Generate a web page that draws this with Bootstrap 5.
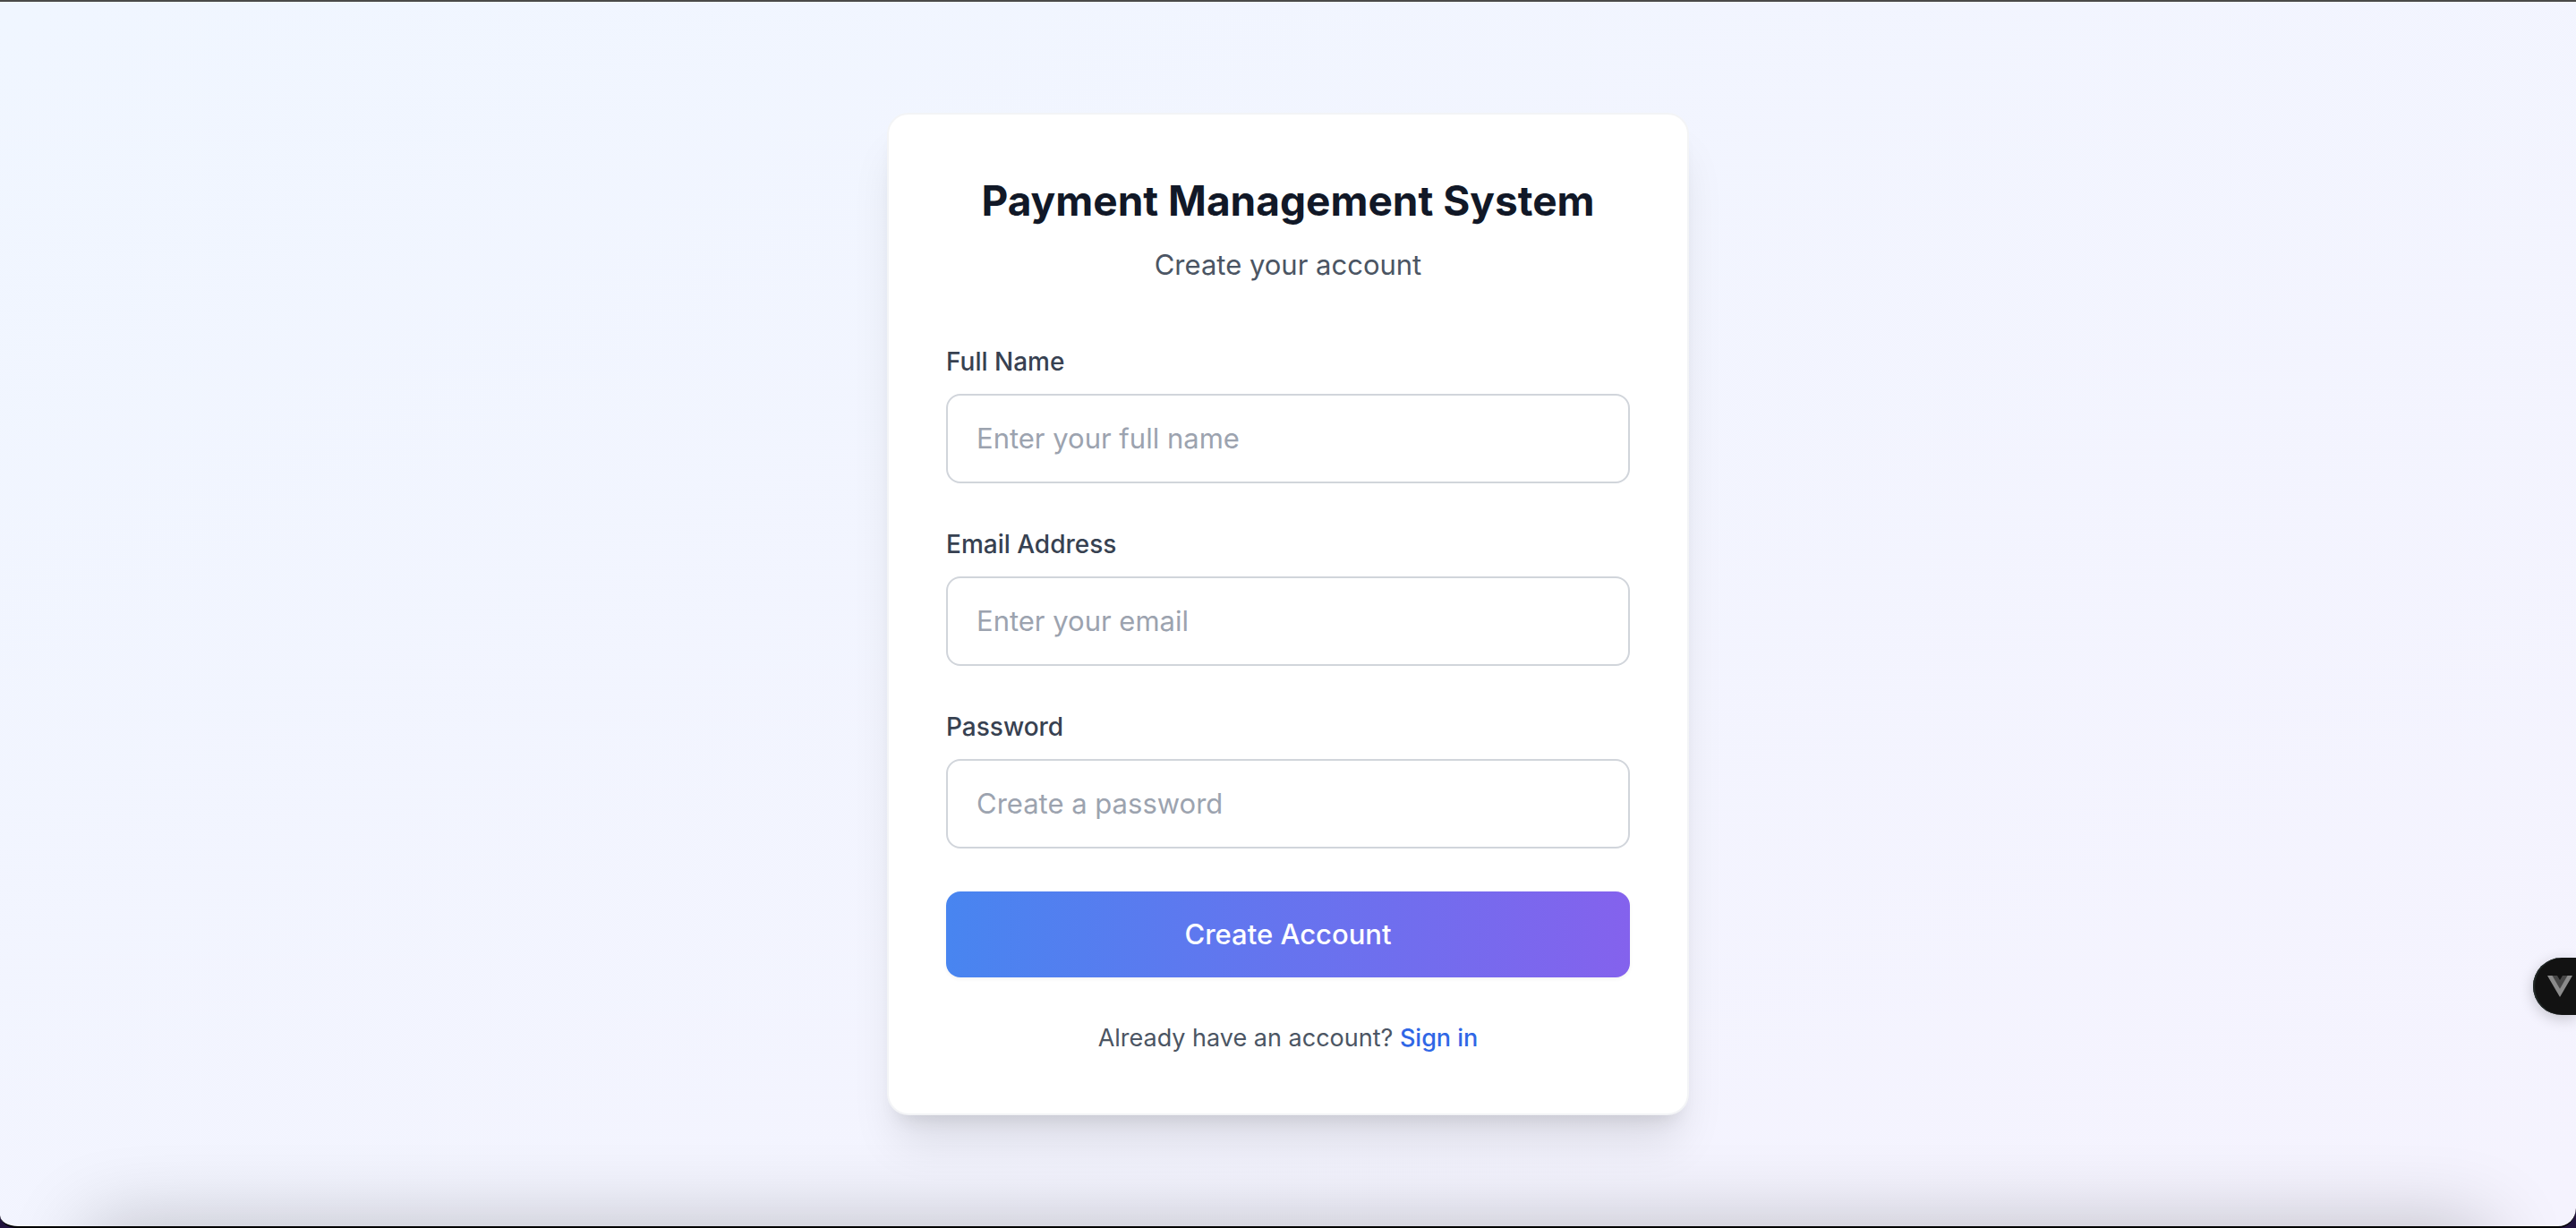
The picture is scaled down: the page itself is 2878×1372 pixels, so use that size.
<!DOCTYPE html>
<html lang="en">
<head>
<meta charset="utf-8">
<meta name="viewport" content="width=device-width, initial-scale=1">
<title>Payment Management System</title>
<link href="https://cdn.jsdelivr.net/npm/bootstrap@5.3.0/dist/css/bootstrap.min.css" rel="stylesheet">
<style>
  body {
    font-family: Inter, "Liberation Sans", sans-serif;
    background: #22143f;
  }
  .app-window {
    background: linear-gradient(to bottom right, #f0f6ff, #f5f3fe);
    border-top: 2px solid #4a4a48;
    border-bottom: 2px solid #000;
    border-radius: 0 0 20px 20px / 0 0 22px 14px;
  }
  /* soft shade rising from the bottom edge of the window */
  .edge-shade {
    top: 100%;
    left: 100px;
    right: 100px;
    height: 200px;
    box-shadow: 0 0 90px rgba(0, 0, 0, .24);
    pointer-events: none;
  }
  .signup-card {
    max-width: 896px;
    padding: 64px;
    border: 2px solid #f3f4f6;
    border-radius: 24px;
    box-shadow: 0 40px 50px -10px rgba(0, 0, 0, .1), 0 16px 20px -12px rgba(0, 0, 0, .1);
  }
  .signup-title { font-size: 46px; line-height: 64px; color: #111827; }
  .signup-sub { font-size: 31px; line-height: 48px; color: #4b5563; }
  .signup-label { font-size: 28px; line-height: 40px; color: #374151; }
  .signup-input {
    padding: 24px 32px;
    border: 2px solid #d1d5db;
    border-radius: 16px;
    font-size: 31px;
    line-height: 48px;
  }
  .signup-input::placeholder { color: #9ca3af; }
  .signup-btn {
    padding: 24px 32px;
    border: 0;
    border-radius: 16px;
    font-size: 31px;
    line-height: 48px;
    color: #fff;
    background: linear-gradient(90deg, #4885f0, #8462ed);
    box-shadow: 0 2px 4px rgba(0, 0, 0, .05);
  }
  .signup-btn:hover { color: #fff; }
  .signup-foot { font-size: 27px; line-height: 40px; color: #4b5563; }
  .signup-foot a { color: #2f67e6; }
  .stack-48 { gap: 48px; }
  .gap-16 { gap: 16px; }
  .dev-pill {
    right: 0;
    top: 1068px;
    width: 48px;
    height: 64px;
    padding: 0 0 0 16px;
    border: 0;
    border-radius: 32px 0 0 32px;
    background: #121212;
    box-shadow: inset 2px 0 1px #222a28, 0 4px 16px rgba(0, 0, 0, .2);
  }
</style>
<script src="https://cdn.jsdelivr.net/npm/bootstrap@5.3.0/dist/js/bootstrap.bundle.min.js"></script>
</head>
<body class="d-flex flex-column min-vh-100">
<main class="app-window position-relative overflow-hidden flex-fill d-flex align-items-center justify-content-center p-4">
  <div class="edge-shade position-absolute"></div>
  <section class="signup-card position-relative w-100 bg-white">
    <header class="d-flex flex-column gap-16 text-center">
      <h1 class="signup-title fw-bold m-0">Payment Management System</h1>
      <p class="signup-sub m-0">Create your account</p>
    </header>
    <form class="d-flex flex-column stack-48 mt-5 pt-3">
      <div class="d-flex flex-column gap-16">
        <label class="signup-label fw-medium" for="fullName">Full Name</label>
        <input class="signup-input form-control" type="text" id="fullName" placeholder="Enter your full name">
      </div>
      <div class="d-flex flex-column gap-16">
        <label class="signup-label fw-medium" for="email">Email Address</label>
        <input class="signup-input form-control" type="email" id="email" placeholder="Enter your email">
      </div>
      <div class="d-flex flex-column gap-16">
        <label class="signup-label fw-medium" for="password">Password</label>
        <input class="signup-input form-control" type="password" id="password" placeholder="Create a password">
      </div>
      <button class="signup-btn btn w-100 fw-medium" type="submit">Create Account</button>
    </form>
    <p class="signup-foot text-center mb-0 mt-5">Already have an account? <a class="fw-medium text-decoration-none" href="#">Sign in</a></p>
  </section>
  <button class="dev-pill position-absolute d-flex align-items-center" type="button" aria-label="Developer tools">
    <svg width="28" height="24" viewBox="0 0 28 24" aria-hidden="true">
      <path d="M5 0h6l3 5 3-5h6l-9 16z" fill="#484848"/>
      <path d="M0 0h5.500L14 14.700 22.500 0H28L14 24z" fill="#8b8b8b"/>
    </svg>
  </button>
</main>
</body>
</html>
